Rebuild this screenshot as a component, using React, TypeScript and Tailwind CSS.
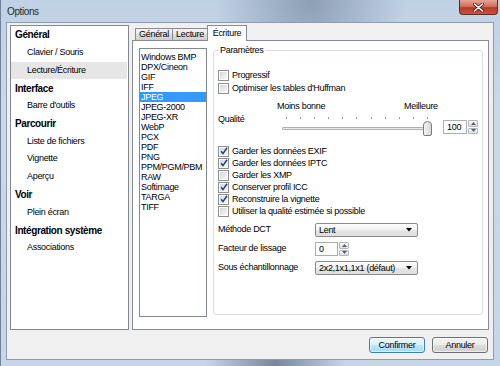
import React from 'react';

const sidebar = [
  { label: 'Général', header: true },
  { label: 'Clavier / Souris' },
  { label: 'Lecture/Écriture', selected: true },
  { label: 'Interface', header: true },
  { label: "Barre d'outils" },
  { label: 'Parcourir', header: true },
  { label: 'Liste de fichiers' },
  { label: 'Vignette' },
  { label: 'Aperçu' },
  { label: 'Voir', header: true },
  { label: 'Plein écran' },
  { label: 'Intégration système', header: true },
  { label: 'Associations' },
];

const formats = [
  'Windows BMP',
  'DPX/Cineon',
  'GIF',
  'IFF',
  'JPEG',
  'JPEG-2000',
  'JPEG-XR',
  'WebP',
  'PCX',
  'PDF',
  'PNG',
  'PPM/PGM/PBM',
  'RAW',
  'Softimage',
  'TARGA',
  'TIFF',
];

function CheckBox({ checked, label }: { checked?: boolean; label: string }) {
  return (
    <div className="flex items-center h-[12px] gap-[3px]">
      <span className="w-[11px] h-[11px] border border-[#8e8f8f] bg-white p-px flex">
        <span className="flex-1 bg-[linear-gradient(135deg,#d4d7db,#f8f8f8)] flex items-center justify-center">
          {checked && (
            <svg width="8" height="8" viewBox="0 0 8 8">
              <path d="M1 4.2 L3 6.6 L7 0.8" fill="none" stroke="#23407a" strokeWidth="1.5" />
            </svg>
          )}
        </span>
      </span>
      <span className="leading-[12px] whitespace-nowrap">{label}</span>
    </div>
  );
}

function Combo({ value }: { value: string }) {
  return (
    <div className="w-[103px] h-[14px] border border-[#8a8a8a] rounded-[2px] bg-[linear-gradient(#fdfdfd,#f1f1f1_50%,#e6e6e6_50%,#dedede)] flex items-center justify-between pl-[3px] pr-[5px]">
      <span className="leading-[12px] whitespace-nowrap">{value}</span>
      <svg width="6" height="4" viewBox="0 0 6 4">
        <path d="M0 0 H6 L3 3.5 Z" fill="#000" />
      </svg>
    </div>
  );
}

function Spinner({ value, width }: { value: string; width: string }) {
  return (
    <div className="flex h-[14px]">
      <div className={`${width} border border-[#abadb3] bg-white flex items-center pl-[3px]`}>
        <span className="leading-[12px]">{value}</span>
      </div>
      <div className="w-[10px] ml-px flex flex-col gap-px">
        <div className="flex-1 border border-[#b5b5b5] rounded-[1px] bg-[linear-gradient(#f6f6f6,#e2e2e2)] flex items-center justify-center">
          <svg width="5" height="3" viewBox="0 0 5 3">
            <path d="M0 3 H5 L2.5 0 Z" fill="#4d6185" />
          </svg>
        </div>
        <div className="flex-1 border border-[#b5b5b5] rounded-[1px] bg-[linear-gradient(#f6f6f6,#e2e2e2)] flex items-center justify-center">
          <svg width="5" height="3" viewBox="0 0 5 3">
            <path d="M0 0 H5 L2.5 3 Z" fill="#4d6185" />
          </svg>
        </div>
      </div>
    </div>
  );
}

function Slider() {
  const ticks = Array.from({ length: 11 });
  return (
    <div className="relative w-[151px] h-[24px]">
      <div className="flex justify-between pl-[5px] pr-[4px] pt-[5px]">
        {ticks.map((_, i) => (
          <span key={i} className="w-px h-[2px] bg-[#9a9a9a]" />
        ))}
      </div>
      <div className="mt-[8px] ml-px w-[148px] h-[3px] border border-[#b0b0b0] bg-[#e7eaea] rounded-[1px]" />
      <svg className="absolute left-[142px] top-[9px]" width="9" height="15" viewBox="0 0 9 15">
        <defs>
          <linearGradient id="thumb" x1="0" x2="1" y1="0" y2="0">
            <stop offset="0" stopColor="#f5f5f5" />
            <stop offset="1" stopColor="#d6d6d6" />
          </linearGradient>
        </defs>
        <path d="M0.5 4 Q0.5 0.5 4.5 0.5 Q8.5 0.5 8.5 4 V13 Q8.5 14.5 7 14.5 H2 Q0.5 14.5 0.5 13 Z" fill="url(#thumb)" stroke="#7c7c7c" />
      </svg>
    </div>
  );
}

export default function App() {
  return (
    <div className="w-[500px] h-[366px] overflow-hidden flex flex-col font-['Liberation_Sans',Arial,sans-serif] text-[9px] tracking-[-0.3px] text-black bg-[radial-gradient(ellipse_at_62%_0%,rgba(80,98,122,0.45),transparent_22%),radial-gradient(ellipse_at_55%_100%,rgba(40,55,80,0.5),transparent_18%),linear-gradient(#bfd1e4,#cad9e8_30%,#c6d6e6)] border-l border-[#6f8299]">
      {/* title bar */}
      <div className="h-[22px] flex justify-between items-start pl-[6px] pr-[2px]">
        <span className="mt-[5px] text-[10px] tracking-[-0.4px] leading-[14px] text-[#1e2a36]">Options</span>
        <div className="w-[39px] h-[15px] rounded-b-[4px] border border-t-0 border-[#5c2b2b] bg-[linear-gradient(#e8a493,#d0715f_45%,#b73a26_55%,#c7553f)] flex items-center justify-center">
          <svg width="11" height="9" viewBox="0 0 11 9">
            <path d="M1.5 1 L9.5 8 M9.5 1 L1.5 8" stroke="#3b1c1c" strokeWidth="3" strokeLinecap="round" />
            <path d="M1.5 1 L9.5 8 M9.5 1 L1.5 8" stroke="#fff" strokeWidth="1.6" strokeLinecap="round" />
          </svg>
        </div>
      </div>

      {/* client area */}
      <div className="ml-[5px] w-[488px] h-[338px] bg-[#f0f0f0] border border-[#8e9cab] flex flex-col pl-[3px] pr-[4px] pt-[2px]">
        <div className="flex gap-[3px] h-[305px]">
          {/* left navigation */}
          <div className="w-[119px] h-[305px] border border-[#828790] bg-white flex flex-col">
            {sidebar.map((item) => (
              <div
                key={item.label}
                className={`h-[17.75px] flex items-center mr-px whitespace-nowrap ${
                  item.header ? 'pl-[4px] font-bold text-[10px] tracking-[-0.4px]' : 'pl-[16px]'
                } ${item.selected ? 'bg-[#e6e6e6]' : ''}`}
              >
                {item.label}
              </div>
            ))}
          </div>

          {/* tab control */}
          <div className="w-[357px] flex flex-col">
            <div className="h-[15px] flex items-end pl-[3px]">
              <div className="w-[38px] h-[12px] border border-b-0 border-[#898c95] bg-[linear-gradient(#f2f2f2,#ebebeb_50%,#dddddd_50%,#cfcfcf)] flex items-center justify-center leading-[11px]">
                Général
              </div>
              <div className="w-[36px] h-[12px] -ml-px border border-b-0 border-[#898c95] bg-[linear-gradient(#f2f2f2,#ebebeb_50%,#dddddd_50%,#cfcfcf)] flex items-center justify-center leading-[11px]">
                Lecture
              </div>
              <div className="relative z-10 w-[40px] h-[16px] -ml-px -mb-px border border-b-0 border-[#898c95] bg-white flex items-start justify-center pt-[1px] leading-[12px]">
                Écriture
              </div>
            </div>
            <div className="h-[290px] border border-[#898c95] bg-white flex items-start pt-[7px] pl-[6px] gap-[6px]">
              {/* format list */}
              <div className="w-[68px] h-[269px] border border-[#828790] bg-white pt-[3px]">
                {formats.map((f) => (
                  <div
                    key={f}
                    className={`h-[10px] leading-[10px] pl-[1px] whitespace-nowrap ${
                      f === 'JPEG' ? 'bg-[#3399ff] text-white' : ''
                    }`}
                  >
                    {f}
                  </div>
                ))}
              </div>

              {/* parameters group */}
              <div className="relative mt-[2px] w-[270px] h-[265px] border border-[#d5dfe5] rounded-[3px] pl-[4px] pt-[18px]">
                <span className="absolute left-[5px] -top-[6px] bg-white px-[1px] leading-[11px]">Paramètres</span>
                <CheckBox label="Progressif" />
                <div className="mt-px">
                  <CheckBox label="Optimiser les tables d'Huffman" />
                </div>
                <div className="mt-[6px] h-[12px] flex items-center leading-[12px]">
                  <span className="ml-[59px] w-[127px]">Moins bonne</span>
                  <span>Meilleure</span>
                </div>
                <div className="flex items-start h-[24px]">
                  <span className="w-[63px] mt-px leading-[12px]">Qualité</span>
                  <Slider />
                  <div className="ml-[11px] mt-[8px]">
                    <Spinner value="100" width="w-[24px]" />
                  </div>
                </div>
                <div className="mt-[9px] flex flex-col">
                  <CheckBox checked label="Garder les données EXIF" />
                  <CheckBox checked label="Garder les données IPTC" />
                  <CheckBox label="Garder les XMP" />
                  <CheckBox checked label="Conserver profil ICC" />
                  <CheckBox checked label="Reconstruire la vignette" />
                  <CheckBox label="Utiliser la qualité estimée si possible" />
                </div>
                <div className="mt-[6px] flex items-center">
                  <span className="w-[97px]">Méthode DCT</span>
                  <Combo value="Lent" />
                </div>
                <div className="mt-[5px] flex items-center">
                  <span className="w-[97px]">Facteur de lissage</span>
                  <Spinner value="0" width="w-[23px]" />
                </div>
                <div className="mt-[5px] flex items-center">
                  <span className="w-[97px]">Sous échantillonnage</span>
                  <Combo value="2x2,1x1,1x1 (défaut)" />
                </div>
              </div>
            </div>
          </div>
        </div>

        {/* buttons */}
        <div className="mt-[7px] flex justify-end gap-[7px] pr-[1px]">
          <button className="w-[56px] h-[16px] rounded-[3px] border border-[#3c7fb1] bg-[linear-gradient(#eaf6fd,#d9f0fc_50%,#bee6fd_50%,#a7d9f5)] shadow-[inset_0_0_0_1px_rgba(255,255,255,0.6)] leading-[12px]">
            Confirmer
          </button>
          <button className="w-[56px] h-[16px] rounded-[3px] border border-[#707070] bg-[linear-gradient(#f2f2f2,#ebebeb_50%,#dddddd_50%,#cfcfcf)] shadow-[inset_0_0_0_1px_rgba(255,255,255,0.6)] leading-[12px]">
            Annuler
          </button>
        </div>
      </div>
    </div>
  );
}
